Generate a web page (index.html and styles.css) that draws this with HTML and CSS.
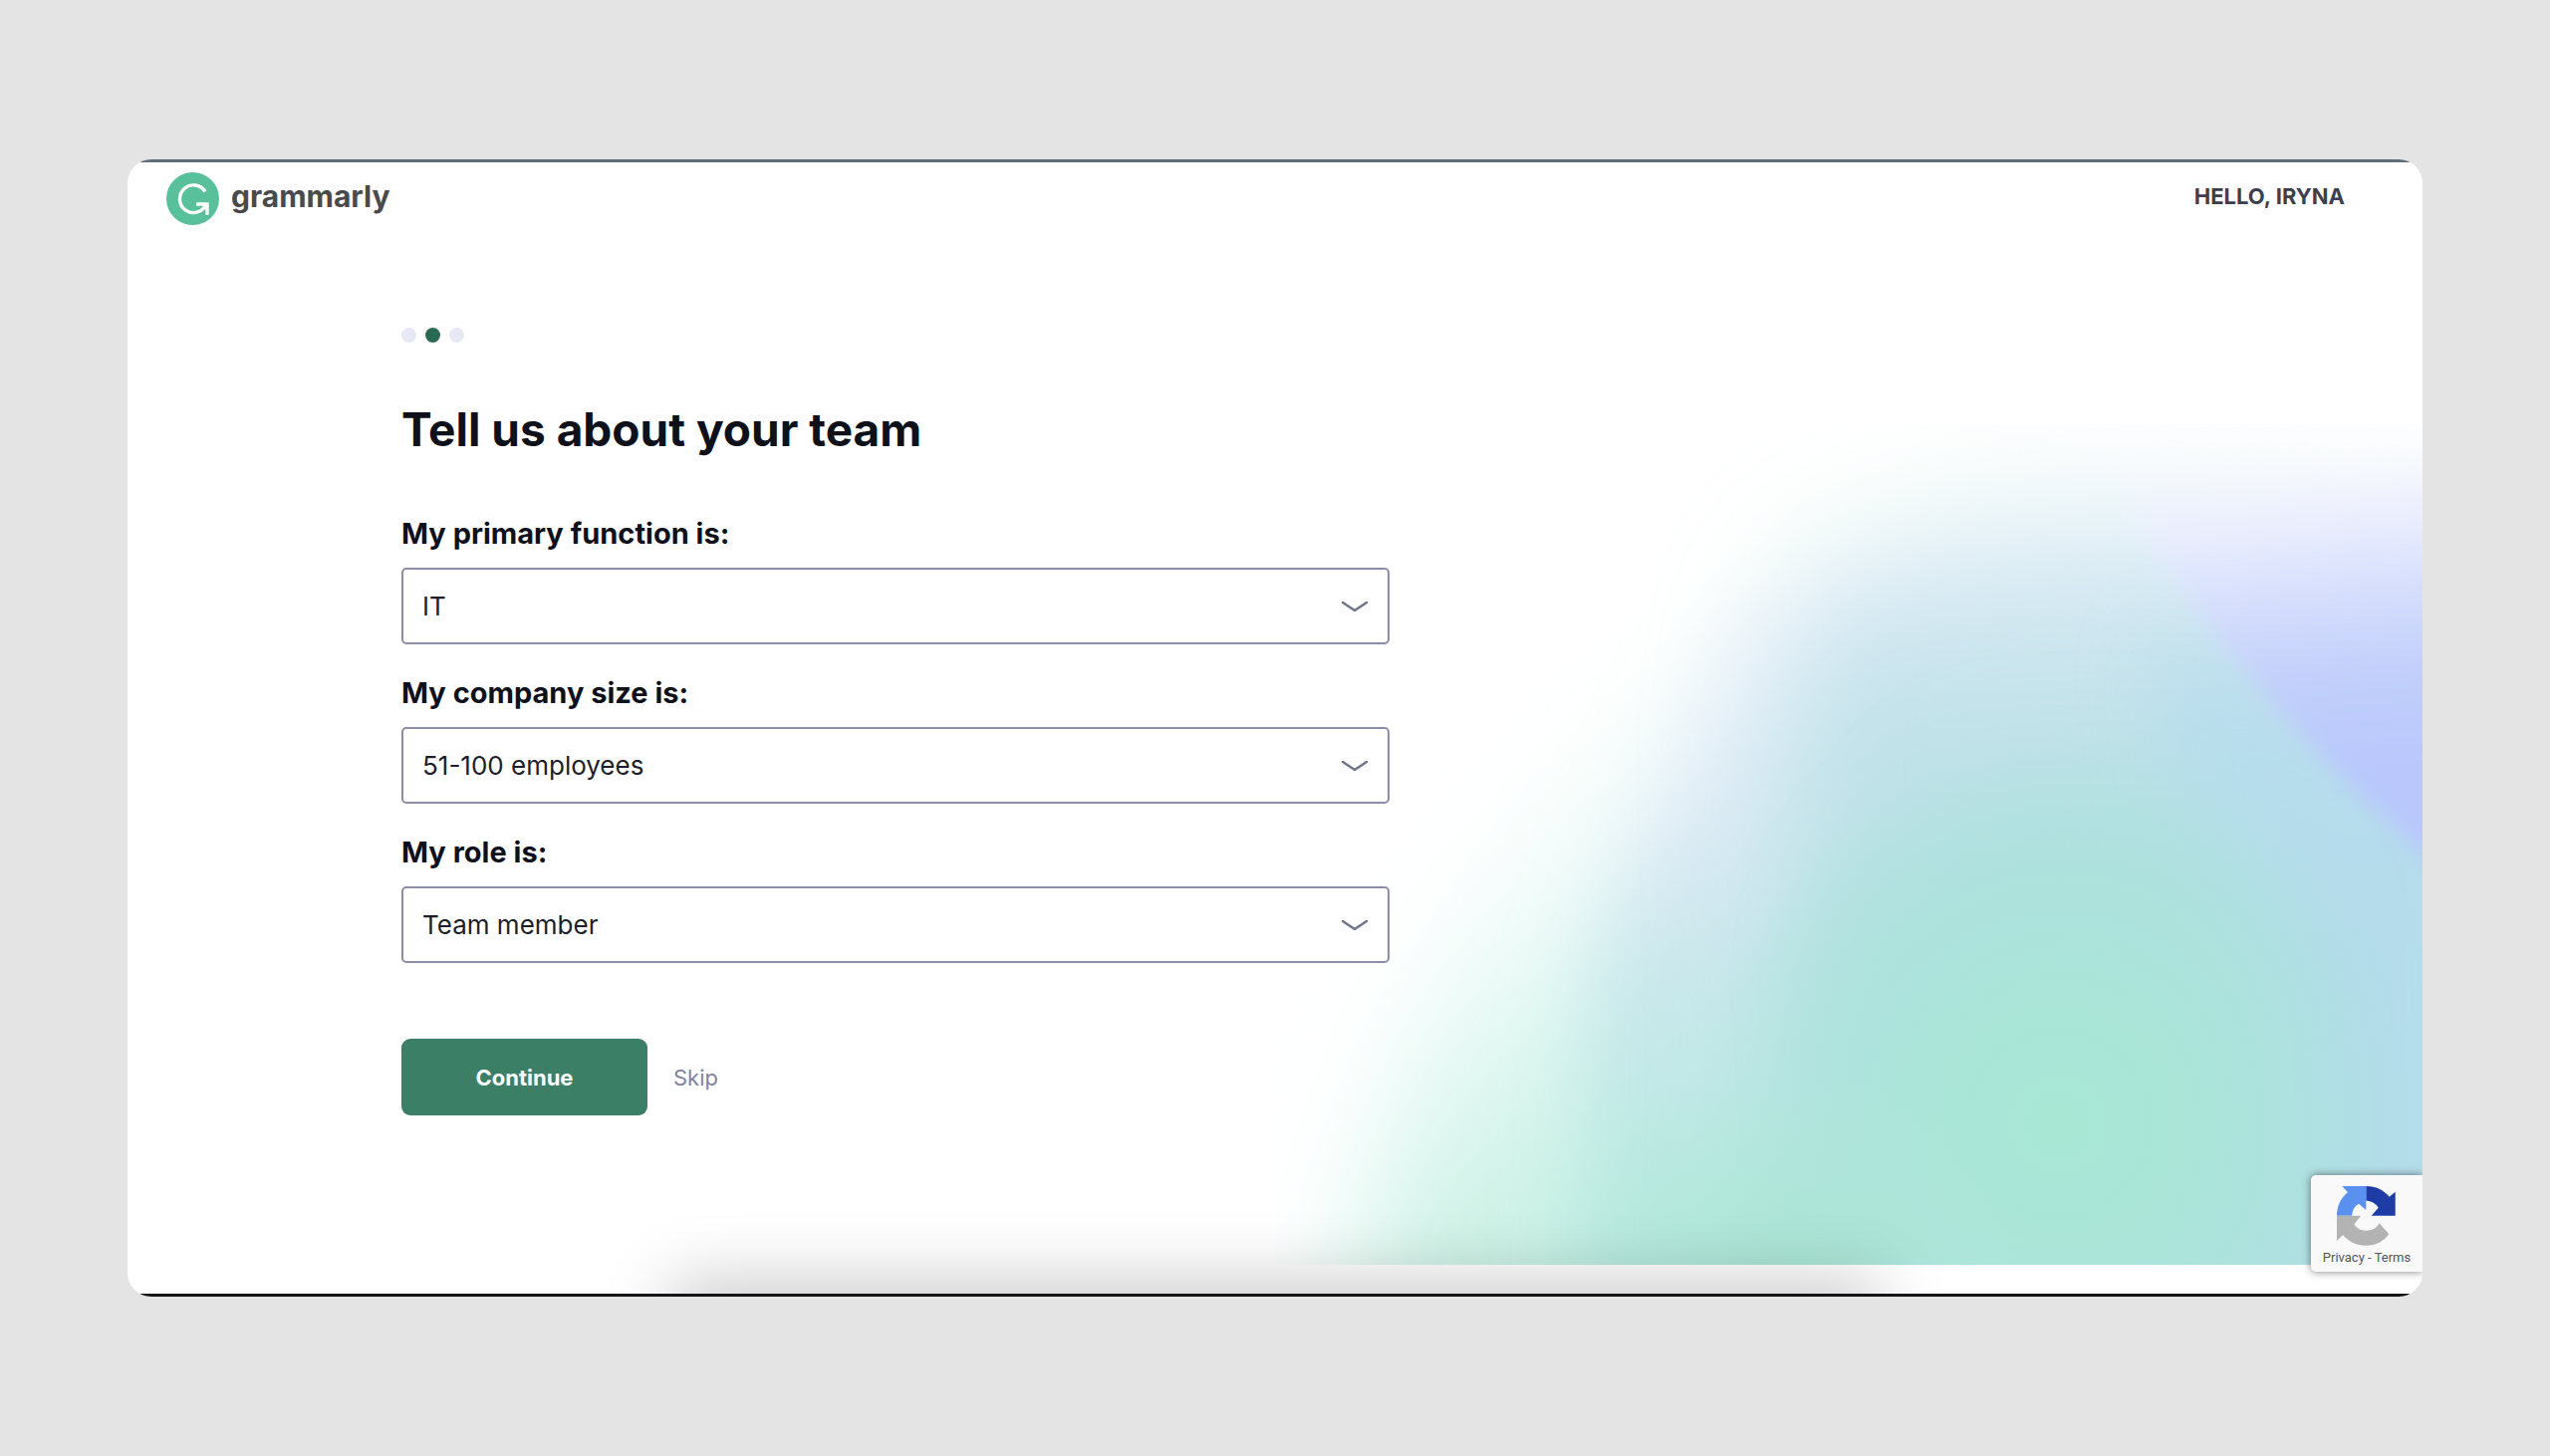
FILE: index.html
```html
<!DOCTYPE html>
<html lang="en">
<head>
  <meta charset="UTF-8" />
  <meta name="viewport" content="width=device-width, initial-scale=1" />
  <title>Tell us about your team</title>
  <link rel="stylesheet" href="styles.css">
</head>
<body>

  <div class="window">
    <svg class="art" viewBox="1272 431 1160 840" preserveAspectRatio="none" aria-hidden="true">
      <defs>
        <filter id="blur-s" x="-50%" y="-50%" width="200%" height="200%"><feGaussianBlur stdDeviation="12"/></filter>
        <filter id="blur-m" x="-50%" y="-50%" width="200%" height="200%"><feGaussianBlur stdDeviation="40"/></filter>
        <filter id="blur-l" x="-50%" y="-50%" width="200%" height="200%"><feGaussianBlur stdDeviation="60"/></filter>
        <linearGradient id="violet" gradientUnits="userSpaceOnUse" x1="2300" y1="465" x2="2330" y2="780">
          <stop offset="0" stop-color="#f6f6ff" stop-opacity="0"/>
          <stop offset="0.2" stop-color="#eceefe" stop-opacity="0.9"/>
          <stop offset="0.4" stop-color="#d9e1fd"/>
          <stop offset="0.7" stop-color="#c2cffb"/>
          <stop offset="1" stop-color="#b9c7fd"/>
        </linearGradient>
        <linearGradient id="sky" gradientUnits="userSpaceOnUse" x1="1940" y1="480" x2="1960" y2="960">
          <stop offset="0" stop-color="#eef6fc"/>
          <stop offset="0.2" stop-color="#dbebf5"/>
          <stop offset="0.45" stop-color="#c4e2eb"/>
          <stop offset="1" stop-color="#b3e0e0"/>
        </linearGradient>
        <linearGradient id="haze" gradientUnits="userSpaceOnUse" x1="1720" y1="620" x2="1660" y2="1200">
          <stop offset="0" stop-color="#f6f7fe"/>
          <stop offset="0.35" stop-color="#dfebf6"/>
          <stop offset="0.6" stop-color="#cbe7ec"/>
          <stop offset="1" stop-color="#b9e9e1"/>
        </linearGradient>
        <radialGradient id="mint" gradientUnits="userSpaceOnUse" cx="2065" cy="1130" r="370">
          <stop offset="0" stop-color="#a8e7d4"/>
          <stop offset="0.35" stop-color="#a9e6d7" stop-opacity="0.85"/>
          <stop offset="1" stop-color="#a9e4da" stop-opacity="0"/>
        </radialGradient>
        <radialGradient id="mint-low" gradientUnits="userSpaceOnUse" cx="1790" cy="1330" r="260">
          <stop offset="0" stop-color="#a3e3cf"/>
          <stop offset="1" stop-color="#b4e9da" stop-opacity="0"/>
        </radialGradient>
        <linearGradient id="pale" gradientUnits="userSpaceOnUse" x1="1470" y1="800" x2="1600" y2="1240">
          <stop offset="0" stop-color="#f4fdfa" stop-opacity="0"/>
          <stop offset="0.5" stop-color="#e2f8f2"/>
          <stop offset="1" stop-color="#c9f0e3"/>
        </linearGradient>
      </defs>
      <path filter="url(#blur-m)" fill="#fbfefc" d="M1780 500 Q1920 430 2080 490 L2300 600 L1800 900 L1500 900Z"/>
      <path filter="url(#blur-l)" fill="#f5fcfb" d="M1340 1450 C1350 1150 1440 950 1550 820 C1690 670 1800 600 2000 560 L2500 620 V1450Z"/>
      <path filter="url(#blur-l)" fill="url(#pale)" d="M1345 1500 C1350 1260 1410 1080 1520 900 L1700 700 L1900 700 V1500Z"/>
      <path filter="url(#blur-m)" fill="url(#haze)" d="M1580 1350 L1582 1060 C1590 890 1690 760 1750 610 L2140 600 L2300 900 V1350Z"/>
      <path filter="url(#blur-l)" fill="url(#sky)" d="M1790 1100 C1790 800 1750 660 1830 580 Q1980 510 2130 505 L2700 530 V1400 H1780Z"/>
      <path filter="url(#blur-m)" fill="#b5dcee" d="M2160 640 L2500 800 V1500 H2250 L2200 900Z" opacity="0.8"/>
      <path filter="url(#blur-l)" fill="#b0dfe0" d="M2000 800 L2190 800 L2290 960 L2290 1300 L1900 1300 L1870 950Z"/>
      <rect x="1272" y="431" width="1160" height="840" fill="url(#mint)"/>
      <rect x="1272" y="431" width="1160" height="840" fill="url(#mint-low)"/>
      <path filter="url(#blur-s)" fill="url(#violet)" d="M2070 400 L2140 520 C2215 650 2300 740 2432 862 L2520 940 V505 Q2400 460 2300 400Z"/>
    </svg>

    <header class="header">
      <a class="brand" href="#">
        <svg class="brand-mark" viewBox="0 0 53 53" aria-hidden="true">
          <circle cx="26.5" cy="26.5" r="26.5" fill="#58c19c"/>
          <path d="M39 19.500A13.800 13.800 0 1 0 40 32M30 32H41V42.700" fill="none" stroke="#fff" stroke-width="3.400"/>
        </svg>
        <span class="brand-name">grammarly</span>
      </a>
      <span class="greeting">HELLO, IRYNA</span>
    </header>

    <main class="content">
      <div class="steps">
        <span class="step"></span>
        <span class="step active"></span>
        <span class="step"></span>
      </div>

      <h1 class="title">Tell us about your team</h1>

      <form class="form">
        <div class="field">
          <label for="function">My primary function is:</label>
          <div class="select-box">
            <select id="function">
              <option>IT</option>
            </select>
            <svg class="chevron" viewBox="0 0 28 14" aria-hidden="true"><path d="M2 3L14 11L26 3"/></svg>
          </div>
        </div>
        <div class="field">
          <label for="size">My company size is:</label>
          <div class="select-box">
            <select id="size">
              <option>51-100 employees</option>
            </select>
            <svg class="chevron" viewBox="0 0 28 14" aria-hidden="true"><path d="M2 3L14 11L26 3"/></svg>
          </div>
        </div>
        <div class="field">
          <label for="role">My role is:</label>
          <div class="select-box">
            <select id="role">
              <option>Team member</option>
            </select>
            <svg class="chevron" viewBox="0 0 28 14" aria-hidden="true"><path d="M2 3L14 11L26 3"/></svg>
          </div>
        </div>

        <div class="actions">
          <button class="continue-btn" type="button">Continue</button>
          <button class="skip-btn" type="button">Skip</button>
        </div>
      </form>
    </main>

    <div class="dock-shadow"></div>

    <div class="recaptcha">
      <svg class="recaptcha-logo" viewBox="0 0 60 60" aria-hidden="true">
        <path fill="#1f3ca6" d="M29.300 0C39 0 47 4 52.700 10.700L58.700 5.700V29.700H34.700L41.700 21.700C39 17 34 14.700 29.300 14.700Z"/>
        <path fill="#5a90f0" d="M29.300 0H5.300L11 6.300C4 12 0 20 0 29.700H15.300C15.300 24 18 20 22 17.700L29.300 24Z"/>
        <path fill="#b3b3b3" d="M0 29.700H24.300L17.300 38.300C20 42.500 24 44.700 29.300 44.700C35 44.700 39.500 42.500 42.700 37.300L52.300 48.300C47 55.500 39 59.700 29.300 59.700C20 59.700 12 56 6 49L0 55Z"/>
      </svg>
      <div class="recaptcha-links">
        <a href="#">Privacy</a> - <a href="#">Terms</a>
      </div>
    </div>
  </div>

</body>
</html>
```
FILE: styles.css
```css
* {
  box-sizing: border-box;
}

body {
  margin: 0;
  padding: 160px 5vw;
  background-color: #e4e4e4;
  color: #0e101a;
  font-family: Inter, sans-serif;
}

.window {
  position: relative;
  min-height: calc(100vh - 320px);
  padding: 3px 0;
  background-color: #fff;
  border-radius: 24px;
  overflow: hidden;
}

/* thin strips of the browser frame above and below the page */
.window::before,
.window::after {
  content: "";
  position: absolute;
  left: 0;
  right: 0;
  height: 3px;
}
.window::before {
  top: 0;
  background-color: #5d6d7a;
}
.window::after {
  bottom: 0;
  background-color: #141416;
}

/* Background */
.art {
  position: absolute;
  right: 0;
  bottom: 32px;
  width: 50%;
  height: 74%;
}

.dock-shadow {
  position: absolute;
  left: 25%;
  right: 25%;
  top: 100%;
  height: 60px;
  box-shadow: 0 16px 70px 30px rgba(0, 0, 0, 0.22);
}

/* Header */
.header {
  position: relative;
  display: flex;
  align-items: center;
  justify-content: space-between;
  padding: 10px 78px 0 39px;
}

.brand {
  display: flex;
  align-items: center;
  gap: 12px;
  color: #4a4a4a;
  text-decoration: none;
}
.brand-mark {
  width: 53px;
  height: 53px;
}
.brand-name {
  font-size: 30px;
  font-weight: 700;
  line-height: 48px;
  padding-bottom: 5px;
}

.greeting {
  color: #3c3f50;
  font-size: 22px;
  font-weight: 700;
  line-height: 48px;
  padding-bottom: 5px;
}

/* Content */
.content {
  position: relative;
  max-width: 1267px;
  padding: 103px 0 120px 275px;
}

.steps {
  display: flex;
  gap: 9px;
}
.step {
  width: 15px;
  height: 15px;
  border-radius: 50%;
  background-color: #e7e8f5;
}
.step.active {
  background-color: #2b6a52;
}

.title {
  margin: 59px 0;
  font-size: 46px;
  font-weight: 700;
  line-height: 56px;
}

.field {
  margin-bottom: 31px;
}
.field label {
  display: block;
  margin-bottom: 16px;
  font-size: 29px;
  font-weight: 700;
  line-height: 36px;
}

.select-box {
  position: relative;
}
.select-box select {
  display: block;
  width: 100%;
  height: 77px;
  padding: 0 60px 0 19px;
  appearance: none;
  background-color: #fff;
  border: 2px solid #8b8ea6;
  border-radius: 5px;
  color: #1c1e29;
  font-family: inherit;
  font-size: 26px;
}
.chevron {
  position: absolute;
  top: 32px;
  right: 21px;
  width: 28px;
  height: 14px;
  fill: none;
  stroke: #6d758d;
  stroke-width: 2.4;
  stroke-linecap: round;
  stroke-linejoin: round;
  pointer-events: none;
}

.actions {
  display: flex;
  align-items: center;
  gap: 26px;
  margin-top: 76px;
}
.continue-btn {
  width: 247px;
  height: 77px;
  border: none;
  border-radius: 9px;
  background-color: #3b7f67;
  color: #fff;
  font-family: inherit;
  font-size: 22px;
  font-weight: 700;
  cursor: pointer;
}
.skip-btn {
  padding: 0;
  border: none;
  background: none;
  color: #8083a0;
  font-family: inherit;
  font-size: 22px;
  cursor: pointer;
}

/* reCAPTCHA */
.recaptcha {
  position: absolute;
  right: 0;
  bottom: 25px;
  width: 112px;
  height: 97px;
  padding-top: 11px;
  display: flex;
  flex-direction: column;
  align-items: center;
  gap: 4px;
  background-color: #f9f9f9;
  border-radius: 5px 0 0 5px;
  box-shadow: 0 0 9px rgba(0, 0, 0, 0.5);
}
.recaptcha-logo {
  width: 60px;
  height: 60px;
}
.recaptcha-links {
  color: #555;
  font-family: Roboto, sans-serif;
  font-size: 13px;
  line-height: 16px;
  white-space: nowrap;
}
.recaptcha-links a {
  color: inherit;
  text-decoration: none;
}
```
